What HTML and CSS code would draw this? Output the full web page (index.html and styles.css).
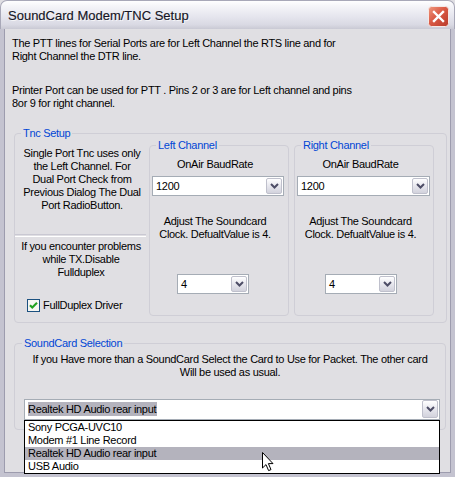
FILE: index.html
```html
<!DOCTYPE html>
<html>
<head>
<meta charset="utf-8">
<title>SoundCard Modem/TNC Setup</title>
<link rel="stylesheet" href="styles.css">
</head>
<body>
<div class="window">
  <div class="titlebar">
    <span class="title">SoundCard Modem/TNC Setup</span>
    <span class="close">
      <svg width="21" height="21" viewBox="0 0 21 21">
        <defs>
          <linearGradient id="cg" x1="0" y1="0" x2="1" y2="1">
            <stop offset="0" stop-color="#F09A80"/>
            <stop offset="0.45" stop-color="#DA5A45"/>
            <stop offset="1" stop-color="#B83A2A"/>
          </linearGradient>
        </defs>
        <rect x="0.5" y="0.5" width="20" height="20" rx="3" fill="url(#cg)" stroke="#F4E8E6"/>
        <path d="M6 6 L15 15 M15 6 L6 15" stroke="#FFFFFF" stroke-width="2.4" stroke-linecap="square"/>
      </svg>
    </span>
  </div>
  <div class="client">
    <p class="note">The PTT lines for Serial Ports are for Left Channel the RTS line and for<br>Right Channel the DTR line.</p>
    <p class="note note2">Printer Port can be used for PTT . Pins 2 or 3 are for Left channel and pins<br>8or 9 for right channel.</p>

    <fieldset class="group tnc">
      <legend>Tnc Setup</legend>
      <div class="tnc-row">
        <div class="leftcol">
          <p class="ctext first">Single Port Tnc uses only<br>the Left Channel. For<br>Dual Port Check from<br>Previous Dialog The Dual<br>Port RadioButton.</p>
          <div class="sep"></div>
          <p class="ctext second">If you encounter problems<br>while TX.Disable<br>Fullduplex</p>
          <div class="check">
            <span class="box">
              <svg width="13" height="13" viewBox="0 0 13 13">
                <rect x="0.5" y="0.5" width="12" height="12" fill="#F6F6F2" stroke="#1C5180"/>
                <path d="M3 6.2 L5.3 8.6 L10 3.8" fill="none" stroke="#21A121" stroke-width="2.1"/>
              </svg>
            </span>
            <span>FullDuplex Driver</span>
          </div>
        </div>

        <fieldset class="group channel chl">
          <legend>Left Channel</legend>
          <p class="ctext label">OnAir BaudRate</p>
          <div class="combo">
            <span class="val">1200</span>
            <span class="btn"><svg width="9" height="6" viewBox="0 0 9 6"><path d="M1 1 L4.5 4.5 L8 1" fill="none" stroke="#4D4D66" stroke-width="2"/></svg></span>
          </div>
          <p class="ctext adj">Adjust The Soundcard<br>Clock. DefualtValue is 4.</p>
          <div class="combo small">
            <span class="val">4</span>
            <span class="btn"><svg width="9" height="6" viewBox="0 0 9 6"><path d="M1 1 L4.5 4.5 L8 1" fill="none" stroke="#4D4D66" stroke-width="2"/></svg></span>
          </div>
        </fieldset>

        <fieldset class="group channel chr">
          <legend>Right Channel</legend>
          <p class="ctext label">OnAir BaudRate</p>
          <div class="combo">
            <span class="val">1200</span>
            <span class="btn"><svg width="9" height="6" viewBox="0 0 9 6"><path d="M1 1 L4.5 4.5 L8 1" fill="none" stroke="#4D4D66" stroke-width="2"/></svg></span>
          </div>
          <p class="ctext adj">Adjust The Soundcard<br>Clock. DefualtValue is 4.</p>
          <div class="combo small">
            <span class="val">4</span>
            <span class="btn"><svg width="9" height="6" viewBox="0 0 9 6"><path d="M1 1 L4.5 4.5 L8 1" fill="none" stroke="#4D4D66" stroke-width="2"/></svg></span>
          </div>
        </fieldset>
      </div>
    </fieldset>

    <fieldset class="group sound">
      <legend>SoundCard Selection</legend>
      <p class="ctext stext">If you Have more than a SoundCard Select the Card to Use for Packet. The other card<br>Will be used as usual.</p>
      <div class="combo wide">
        <span class="val"><span class="sel">Realtek HD Audio rear input</span></span>
        <span class="btn"><svg width="9" height="6" viewBox="0 0 9 6"><path d="M1 1 L4.5 4.5 L8 1" fill="none" stroke="#4D4D66" stroke-width="2"/></svg></span>
        <ul class="droplist">
          <li>Sony PCGA-UVC10</li>
          <li>Modem #1 Line Record</li>
          <li class="hl">Realtek HD Audio rear input</li>
          <li>USB Audio</li>
        </ul>
      </div>
    </fieldset>
  </div>
  <svg class="cursor" width="13" height="20" viewBox="0 0 13 20">
    <path d="M0.5 0.5 L0.5 16 L4 12.6 L6.6 18.6 L9 17.6 L6.4 11.6 L11 11.6 Z" fill="#FFFFFF" stroke="#000000" stroke-width="1" stroke-linejoin="miter"/>
  </svg>
</div>
</body>
</html>
```

FILE: styles.css
```css
html, body {
  margin: 0;
  padding: 0;
}
body {
  width: 455px;
  height: 477px;
  overflow: hidden;
  background: #E0DFE3;
  font-family: "Liberation Sans", Arial, sans-serif;
  font-size: 11px;
  line-height: 13px;
  letter-spacing: -0.3px;
  color: #000;
}
.window {
  position: relative;
  width: 455px;
  height: 477px;
  display: flex;
  flex-direction: column;
  box-sizing: border-box;
}
.titlebar {
  flex: none;
  height: 29px;
  box-sizing: border-box;
  display: flex;
  align-items: center;
  justify-content: space-between;
  padding: 1px 5px 0 7px;
  border-radius: 7px 7px 0 0;
  border: 1px solid #A8A8B8;
  border-bottom: none;
  background: linear-gradient(#FFFFFF 0%, #F4F4F8 20%, #E6E6EE 55%, #D9D9E3 85%, #C9C9D4 100%);
}
.title {
  font-size: 13px;
  letter-spacing: 0;
  color: #151525;
  -webkit-text-stroke: 0.15px #151525;
  text-shadow: 1px 1px 0 rgba(255, 255, 255, 0.7);
}
.close {
  display: flex;
  width: 21px;
  height: 21px;
  margin-top: 1px;
}
.client {
  flex: 1;
  position: relative;
  box-sizing: border-box;
  padding: 8px 0 0 8px;
  background: #E0DFE3;
  border-left: 4px solid #C4C3D0;
  border-right: 4px solid #C4C3D0;
  border-bottom: 4px solid #C4C3D0;
  box-shadow: inset 1px 0 0 #9D9CAE, inset -1px 0 0 #9D9CAE, inset 0 -1px 0 #9D9CAE;
}
.note {
  margin: 0;
}
.note2 {
  margin-top: 21px;
}
.group {
  margin: 0;
  padding: 0;
  border: 1px solid #CFCED6;
  border-radius: 4px;
  min-width: 0;
}
.group legend {
  padding: 0 2px;
  margin-left: 6px;
  color: #0046D5;
  line-height: 13px;
}
.tnc {
  margin: 17px 0 0 2px;
  width: 433px;
  box-sizing: border-box;
  padding: 0 12px 6px 0;
}
.tnc-row {
  display: flex;
  align-items: stretch;
  margin-top: -1px;
}
.leftcol {
  width: 132px;
  margin-right: 2px;
  display: flex;
  flex-direction: column;
}
.ctext {
  margin: 0;
  text-align: center;
}
.leftcol .first {
  margin-top: 8px;
  padding-left: 2px;
}
.sep {
  margin-top: 22px;
  width: 131px;
  height: 1px;
  border-top: 1px solid #C9C8D2;
  border-bottom: 1px solid #FFFFFF;
}
.leftcol .second {
  margin-top: 3px;
}
.check {
  display: flex;
  align-items: center;
  gap: 3px;
  margin-top: 20px;
  padding-left: 12px;
  height: 13px;
}
.box {
  display: flex;
  width: 13px;
  height: 13px;
}
.channel {
  width: 140px;
  box-sizing: border-box;
  padding: 0 4px 21px 2px;
}
.chr {
  margin-left: 5px;
  padding-right: 3px;
}
.channel legend {
  margin-left: 4px;
}
.channel .label {
  margin-top: 6px;
  padding-right: 6px;
}
.combo {
  position: relative;
  display: flex;
  align-items: center;
  justify-content: space-between;
  height: 20px;
  box-sizing: border-box;
  border: 1px solid #A5ACB5;
  background: #FFFFFF;
  padding: 0 1px 0 2px;
  margin-top: 5px;
}
.val {
  padding-left: 1px;
  white-space: nowrap;
}
.btn {
  display: flex;
  align-items: center;
  justify-content: center;
  width: 16px;
  height: 16px;
  box-sizing: border-box;
  border: 1px solid #BFC0CC;
  border-radius: 2px;
  background: linear-gradient(#FFFFFF, #E7E7EE 50%, #D2D2DC);
}
.channel .adj {
  margin-top: 19px;
  padding-right: 6px;
}
.combo.small {
  width: 72px;
  margin-top: 33px;
  margin-left: 25px;
}
.chr .combo.small {
  margin-left: 28px;
}
.sound {
  margin: 14px 0 0 2px;
  width: 432px;
  box-sizing: border-box;
  padding: 3px 5px 9px 0;
}
.sound legend {
  margin-left: 7px;
}
.stext {
  margin-right: -5px;
}
.combo.wide {
  margin-top: 20px;
  margin-left: 9px;
  height: 21px;
  padding-bottom: 1px;
}
.sel {
  background: #B4B3BD;
  padding: 1px 1px 1px 0;
}
.combo.wide .btn {
  height: 18px;
}
.droplist {
  position: absolute;
  left: -1px;
  right: -1px;
  top: 20px;
  margin: 0;
  padding: 0;
  list-style: none;
  background: #FFFFFF;
  border: 1px solid #000000;
  z-index: 2;
}
.droplist li {
  height: 13px;
  line-height: 13px;
  padding-left: 3px;
  white-space: nowrap;
}
.droplist li.hl {
  background: #B4B3BD;
}
.cursor {
  position: absolute;
  left: 262px;
  top: 452px;
  z-index: 5;
}
```
